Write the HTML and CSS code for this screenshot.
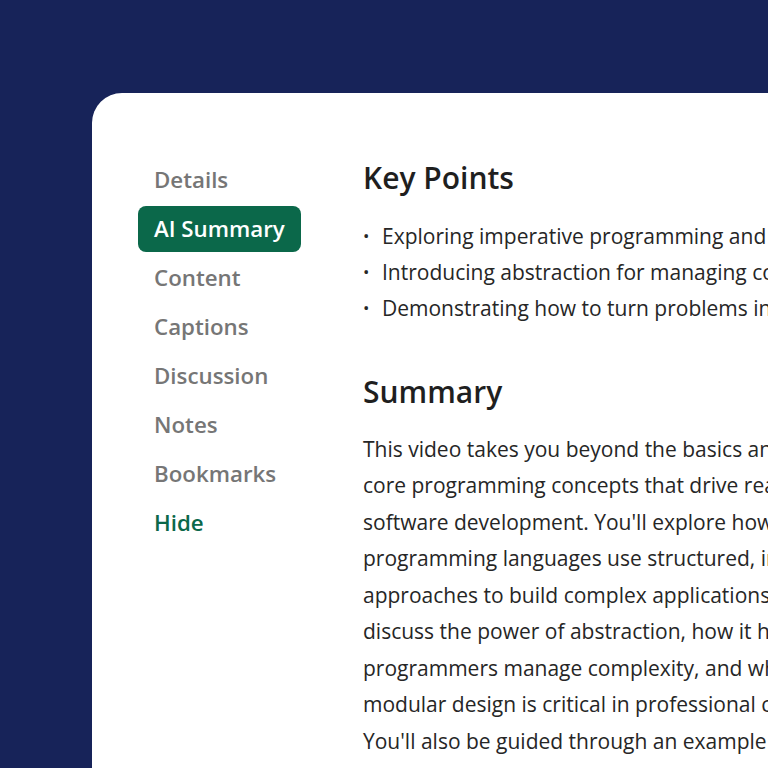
FILE: index.html
```html
<!DOCTYPE html>
<html lang="en">
<head>
<meta charset="utf-8">
<title>AI Summary</title>
<link rel="stylesheet" href="styles.css">
</head>
<body>
<div class="card">
  <nav class="sidebar">
    <a class="nav-item">Details</a>
    <a class="nav-item active">AI Summary</a>
    <a class="nav-item">Content</a>
    <a class="nav-item">Captions</a>
    <a class="nav-item">Discussion</a>
    <a class="nav-item">Notes</a>
    <a class="nav-item">Bookmarks</a>
    <a class="nav-item hide">Hide</a>
  </nav>
  <main class="content">
    <h2 class="heading">Key Points</h2>
    <ul class="points">
      <li>Exploring imperative programming and structured code</li>
      <li>Introducing abstraction for managing complexity</li>
      <li>Demonstrating how to turn problems into modular solutions</li>
    </ul>
    <h2 class="heading summary-heading">Summary</h2>
    <p class="summary">This video takes you beyond the basics and into the<br>core programming concepts that drive real-world<br>software development. You'll explore how modern<br>programming languages use structured, imperative<br>approaches to build complex applications. We'll<br>discuss the power of abstraction, how it helps<br>programmers manage complexity, and why<br>modular design is critical in professional coding.<br>You'll also be guided through an example project.</p>
  </main>
</div>
</body>
</html>
```
FILE: styles.css
```css
html, body {
  margin: 0;
  padding: 0;
  height: 100%;
}
body {
  background: #172359;
  overflow: hidden;
  font-family: "Open Sans", "Noto Sans", sans-serif;
}
.card {
  margin: 93px 0 0 92px;
  width: 1100px;
  height: 900px;
  background: #ffffff;
  border-radius: 30px 0 0 0;
  display: flex;
}
.sidebar {
  display: flex;
  flex-direction: column;
  align-items: flex-start;
  gap: 3px;
  padding: 64px 0 0 46px;
  width: 226px;
  flex-shrink: 0;
}
.nav-item {
  display: block;
  height: 46px;
  line-height: 46px;
  padding: 0 16px;
  border-radius: 8px;
  font-size: 22.3px;
  font-weight: 600;
  color: #767676;
  white-space: nowrap;
}
.nav-item.active {
  background: #0b684a;
  color: #ffffff;
}
.nav-item.hide {
  color: #0b684a;
}
.content {
  padding-top: 65px;
  flex: 1;
  color: #262626;
}
.heading {
  margin: 0 0 0 -1px;
  font-size: 30px;
  line-height: 40px;
  font-weight: 600;
  color: #1f1f1f;
}
.points {
  list-style: none;
  margin: 20px 0 0 0;
  padding: 0;
}
.points li {
  display: flex;
  font-size: 21px;
  line-height: 36px;
  white-space: nowrap;
}
.points li::before {
  content: "\2022";
  flex: none;
  width: 19px;
  margin-left: -1px;
  font-size: 17px;
}
.summary-heading {
  margin-top: 46px;
}
.summary {
  margin: 18.75px 0 0 -1px;
  font-size: 21px;
  line-height: 36.5px;
  white-space: nowrap;
}
```
